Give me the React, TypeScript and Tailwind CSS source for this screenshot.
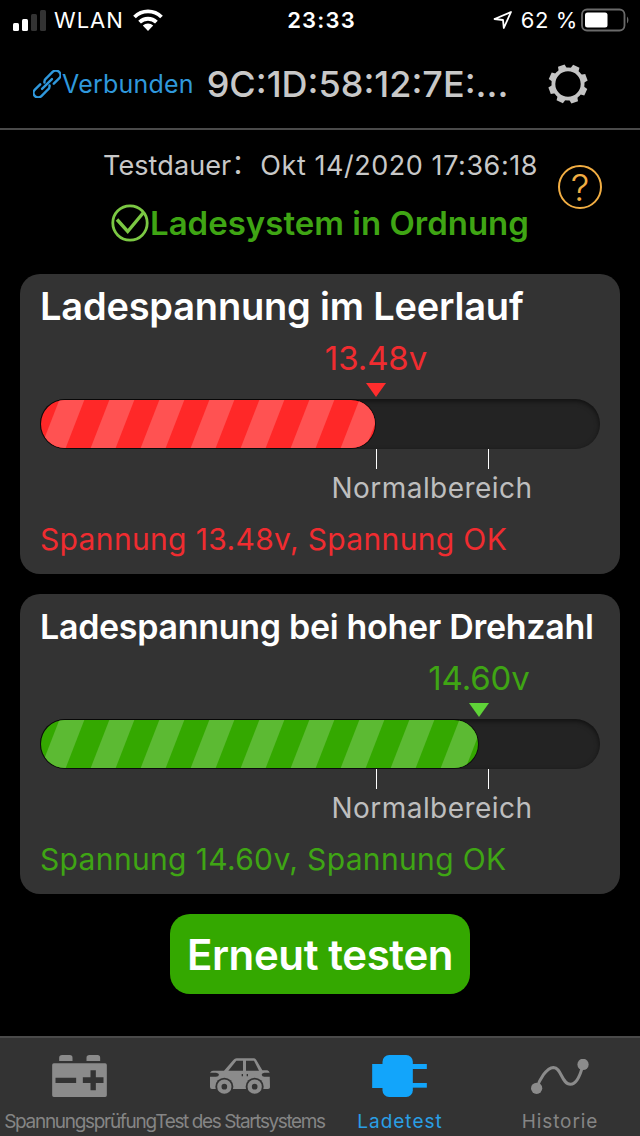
import React from "react";

interface ChargeTest {
  title: string;
  titleClass: string;
  value: string;
  message: string;
  // length of the filled part in px, the track is 560 wide
  fill: number;
  tone: "red" | "green";
}

const TESTS: ChargeTest[] = [
  {
    title: "Ladespannung im Leerlauf",
    titleClass: "h-16 leading-[64px] text-[38px] tracking-[-0.2px]",
    value: "13.48v",
    message: "Spannung 13.48v, Spannung OK",
    fill: 335,
    tone: "red",
  },
  {
    title: "Ladespannung bei hoher Drehzahl",
    titleClass: "h-16 leading-[66px] text-[34px] tracking-[-0.3px]",
    value: "14.60v",
    message: "Spannung 14.60v, Spannung OK",
    fill: 438,
    tone: "green",
  },
];

const TONES = {
  red: { text: "text-[#f02c30]", base: "#ff2828", stripe: "#ff5252", marker: "#ff2d2d" },
  green: { text: "text-[#3fa514]", base: "#34a800", stripe: "#5cba33", marker: "#5fd338" },
};

function StatusBar() {
  return (
    <div className="flex h-10 items-center pl-[13px] pr-[10px] text-white">
      <div className="flex flex-1 items-center">
        <svg width="33" height="21" viewBox="0 0 33 21">
          <rect x="0" y="13" width="6" height="8" rx="1.5" fill="#fff" />
          <rect x="9" y="9" width="6" height="12" rx="1.5" fill="#fff" />
          <rect x="18" y="4" width="6" height="17" rx="1.5" fill="#333" />
          <rect x="27" y="0" width="6" height="21" rx="1.5" fill="#333" />
        </svg>
        <span className="ml-[8px] text-[22px] leading-[42px] tracking-[1px]">WLAN</span>
        <svg className="ml-[9px]" width="30" height="22" viewBox="0 0 30 22">
          <path d="M15 22 L9.8 16.6 A7.4 7.4 0 0 1 20.2 16.6 Z" fill="#fff" />
          <path d="M6.6 13.2 A11.9 11.9 0 0 1 23.4 13.2" fill="none" stroke="#fff" strokeWidth="3.8" />
          <path d="M1.5 8 A19.2 19.2 0 0 1 28.5 8" fill="none" stroke="#fff" strokeWidth="3.8" />
        </svg>
      </div>
      <span className="text-[22px] font-semibold tracking-[1.2px]">23:33</span>
      <div className="flex flex-1 items-center justify-end">
        <svg width="20" height="20" viewBox="0 0 20 20" fill="none" stroke="#fff" strokeWidth="1.8" strokeLinejoin="round">
          <path d="M18 2 L10.8 18 L10 10 L1.5 9 Z" />
        </svg>
        <span className="ml-[8px] text-[22px] tracking-[0.6px]">62 %</span>
        <svg className="ml-[3px]" width="49" height="24" viewBox="0 0 49 24">
          <rect x="1" y="1.5" width="42.5" height="21" rx="5" fill="none" stroke="#6a6a6a" strokeWidth="1.8" />
          <rect x="4" y="4.5" width="22.5" height="15" rx="2.5" fill="#fff" />
          <path d="M46 8.5 a5 5 0 0 1 0 7 Z" fill="#6a6a6a" />
        </svg>
      </div>
    </div>
  );
}

function Header() {
  return (
    <header className="flex h-[90px] items-center border-b-2 border-[#4a4a4a] pl-[33px] pr-[52px]">
      <svg width="28" height="28" viewBox="-14 -14 28 28" fill="none" stroke="#2f98dc" strokeWidth="2.4" strokeLinecap="round">
        <g transform="rotate(-45)">
          <path d="M5 4.6 H12.5 A4.6 4.6 0 0 0 12.5 -4.6 H3.5 A4.6 4.6 0 0 0 -0.8 -2.8" />
          <path d="M-5 -4.6 H-12.5 A4.6 4.6 0 0 0 -12.5 4.6 H-3.5 A4.6 4.6 0 0 0 0.8 2.8" />
          <path d="M-7 0 H7" />
        </g>
      </svg>
      <span className="ml-[1px] pt-[2px] text-[25px] tracking-[0.2px] text-[#2f98dc]">Verbunden</span>
      <span className="ml-[13px] text-[36px] font-medium text-[#c8c8c8]">9C:1D:58:12:7E:...</span>
      <svg className="ml-auto" width="40" height="40" viewBox="-20 -20 40 40">
        <circle r="14.6" fill="none" stroke="#c4c4c4" strokeWidth="3.8" />
        {[0, 45, 90, 135, 180, 225, 270, 315].map((a) => (
          <path key={a} d="M-4.4 -15 L-3.5 -19.6 H3.5 L4.4 -15 Z" fill="#c4c4c4" transform={`rotate(${a + 25})`} />
        ))}
      </svg>
    </header>
  );
}

function Summary() {
  return (
    <section className="relative h-[144px] pt-[11px]">
      <div className="flex h-[50px] items-center pl-[103px] text-[27px] text-[#c8c8c8]">
        <span className="tracking-[0.1px]">Testdauer</span>
        <span className="w-[29px] pb-[7px] font-['Noto_Sans_CJK_SC',sans-serif] leading-none">：</span>
        <span className="tracking-[0.55px]">Okt 14/2020 17:36:18</span>
      </div>
      <div className="flex h-[66px] items-center pl-[111px]">
        <svg className="mb-[2px]" width="38" height="38" viewBox="-19 -19 38 38" fill="none" stroke="#7bc843" strokeWidth="2.8">
          <circle r="17.2" />
          <path d="M-13 -3.5 L-2.3 8.5 L13.5 -10.5" strokeWidth="3.4" />
        </svg>
        <span className="ml-[1px] text-[33px] font-semibold text-[#3fa514]">Ladesystem in Ordnung</span>
      </div>
      <button className="absolute right-[38px] top-[35px] flex h-[44px] w-[44px] items-center justify-center rounded-full border-2 border-[#f2ae43] text-[37px] font-light leading-none text-[#f2ae43]">
        ?
      </button>
    </section>
  );
}

function StripedBar({ fill, tone }: { fill: number; tone: "red" | "green" }) {
  const { base, stripe } = TONES[tone];
  return (
    <div className="h-[50px] rounded-[25px] bg-[#232323] p-px shadow-[inset_0_2px_5px_rgba(0,0,0,0.55)]">
      <div className="h-12 overflow-hidden rounded-[24px] shadow-[0_0_0_1px_rgba(0,0,0,0.6)]" style={{ width: fill - 1, background: base }}>
        <svg className="max-w-none" width="560" height="48" fill={stripe}>
          {Array.from({ length: 10 }).map((_, i) => (
            <path key={i} d="M18.3 0 H43.3 L24.7 48 H-0.3 Z" transform={`translate(${i * 50})`} />
          ))}
        </svg>
      </div>
    </div>
  );
}

function TestCard({ test }: { test: ChargeTest }) {
  const tone = TONES[test.tone];
  return (
    <section className="h-[300px] rounded-[20px] bg-[#333] px-5">
      <h2 className={`whitespace-nowrap font-semibold text-white ${test.titleClass}`}>{test.title}</h2>
      <div className="flex w-[140px] flex-col items-center" style={{ marginLeft: test.fill - 69 }}>
        <span className={`h-10 text-[33px] leading-10 tracking-[-0.1px] ${tone.text}`}>{test.value}</span>
        <svg className="mt-[5px]" width="20" height="14" viewBox="0 0 20 14">
          <path d="M0 0 H20 L10 14 Z" fill={tone.marker} />
        </svg>
      </div>
      <div className="mt-[2px]">
        <StripedBar fill={test.fill} tone={test.tone} />
      </div>
      <div className="ml-[336px] h-5 w-[113px] border-x border-white" />
      <div className="ml-[282px] flex h-[38px] w-[220px] justify-center text-[28px] leading-[38px] tracking-[0.45px] text-[#bebebe]">Normalbereich</div>
      <p className={`whitespace-nowrap text-[30px] leading-[64px] tracking-[0.35px] ${tone.text}`}>{test.message}</p>
    </section>
  );
}

function BatteryIcon() {
  return (
    <svg width="55" height="42" viewBox="0 0 164 126" fill="#8b8b8b">
      <path d="M21 18 V8 Q21 0 30 0 H53 Q61 0 61 8 V18 Z M103 18 V8 Q103 0 112 0 H136 Q144 0 144 8 V18 Z" />
      <path fillRule="evenodd" d="M5 25 H159 Q164 25 164 30 V121 Q164 126 159 126 H5 Q0 126 0 121 V30 Q0 25 5 25 Z M10 68 V84 H72 V68 Z M115 46 V67 H92 V84 H115 V106 H131 V84 H154 V67 H131 V46 Z" />
    </svg>
  );
}

function CarIcon() {
  return (
    <svg width="60" height="36" viewBox="0 0 180 108">
      <path
        fill="#8b8b8b"
        fillRule="evenodd"
        d="M42 38 L70 6 Q74 1 80 1 H131 Q136 1 139 6 L157 37 H172 Q178 38 179 46 L180 88 Q180 93 174 93 H6 Q0 93 0 87 V48 Q1 38 10 38 Z M55 38 H99 V8 H79 Z M108 8 V38 H147 L132 8 Z"
      />
      <path d="M3 44 H18 Q27 45 27 50 Q26 56 18 56 H0 V46 Z M177 44 H163 Q155 45 155 50 Q156 56 163 56 H180 V46 Z M95 48 h4 v7 h-4 Z M110 48 h4 v7 h-4 Z" fill="#333" />
      {[43, 134].map((x) => (
        <g key={x}>
          <circle cx={x} cy="86" r="27" fill="#333" />
          <circle cx={x} cy="86" r="15" fill="none" stroke="#8b8b8b" strokeWidth="13" />
        </g>
      ))}
    </svg>
  );
}

function PlugIcon() {
  return (
    <svg width="55" height="42" viewBox="0 0 164 126" fill="#12a5fb">
      <rect x="0" y="27" width="40" height="72" />
      <rect x="31" y="0" width="91" height="126" rx="20" />
      <rect x="118" y="27" width="46" height="15" />
      <rect x="118" y="84" width="46" height="14" />
    </svg>
  );
}

function HistoryIcon() {
  return (
    <svg width="58" height="35" viewBox="0 0 175 105" fill="none" stroke="#8b8b8b" strokeWidth="9">
      <path d="M17 88 C26 62 46 26 68 25 C92 25 92 76 119 76 C138 76 150 45 157 16" />
      <circle cx="17" cy="88" r="17" fill="#8b8b8b" stroke="none" />
      <circle cx="157" cy="16" r="17" fill="#8b8b8b" stroke="none" />
    </svg>
  );
}

const TABS = [
  { label: "Spannungsprüfung", icon: <BatteryIcon />, className: "text-[#858585] tracking-[-1.3px]" },
  { label: "Test des Startsystems", icon: <CarIcon />, className: "text-[#858585] tracking-[-1.4px]" },
  { label: "Ladetest", icon: <PlugIcon />, className: "text-[#2a9fe5] tracking-[1px]" },
  { label: "Historie", icon: <HistoryIcon />, className: "text-[#858585] tracking-[0.9px]" },
];

function TabBar() {
  return (
    <nav className="mt-auto grid h-[100px] grid-cols-4 border-t-2 border-[#4a4a4a] bg-[#333]">
      {TABS.map((tab) => (
        <div key={tab.label} className="flex flex-col items-center">
          <div className="mt-[17px] flex h-[42px] items-center pr-[1px]">{tab.icon}</div>
          <span className={`mt-[11px] whitespace-nowrap text-[19px] leading-[28px] ${tab.className}`}>{tab.label}</span>
        </div>
      ))}
    </nav>
  );
}

export default function App() {
  return (
    <div className="flex h-[1136px] w-[640px] flex-col overflow-hidden bg-black font-['Inter','Noto_Sans_CJK_SC',sans-serif]">
      <StatusBar />
      <Header />
      <Summary />
      <main className="flex flex-col gap-5 px-5">
        {TESTS.map((test) => (
          <TestCard key={test.title} test={test} />
        ))}
        <button className="h-20 w-[300px] self-center whitespace-nowrap rounded-[20px] bg-[#34a800] text-[42px] font-semibold tracking-[-0.4px] text-white">
          Erneut testen
        </button>
      </main>
      <TabBar />
    </div>
  );
}
